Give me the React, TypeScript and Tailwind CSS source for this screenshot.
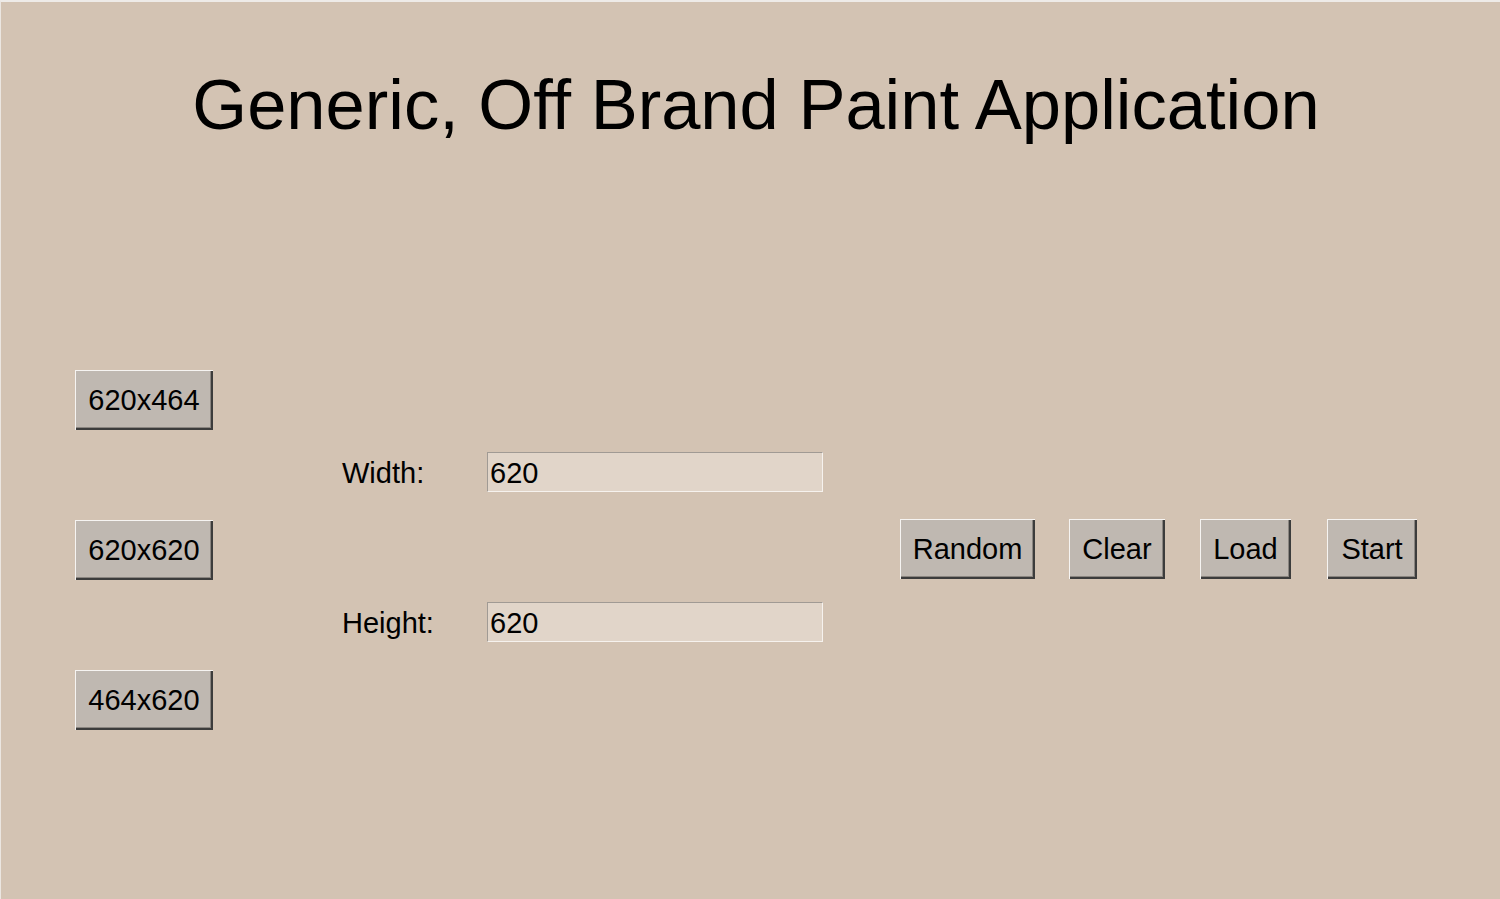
import { useState } from "react";

const btn =
  "h-[60px] bg-[#bfb8b1] text-black text-[29px] leading-none flex items-center justify-center shadow-[inset_1px_1px_#f6f4f2,inset_-2px_-2px_#3c3c3c,inset_-3px_-3px_#8a8580]";

const field =
  "w-[336px] h-[40px] bg-[#e1d5c9] text-[29px] leading-none text-black px-[2px] pt-[2px] border border-t-[#a09a94] border-l-[#a09a94] border-b-[#f6f2ee] border-r-[#f6f2ee] outline-none";

const App = () => {
  const [width, setWidth] = useState("620");
  const [height, setHeight] = useState("620");

  return (
    <div
      className="w-[1500px] h-[899px] bg-[#d3c3b3] border-t-2 border-t-[#eeebe8] border-l border-l-[#ebe6e1] overflow-hidden"
      style={{ fontFamily: '"Liberation Sans", Arial, sans-serif' }}
    >
      {/* TITLE */}
      <h1 className="text-center text-[70.5px] leading-[80px] text-black pt-[63px] pl-[11px]">
        Generic, Off Brand Paint Application
      </h1>

      {/* BODY */}
      <div className="flex items-start mt-[225px] pl-[74px]">
        {/* SIZE PRESETS */}
        <div className="flex flex-col gap-[90px]">
          <button className={`${btn} w-[138px]`}>620x464</button>
          <button className={`${btn} w-[138px]`}>620x620</button>
          <button className={`${btn} w-[138px]`}>464x620</button>
        </div>

        {/* WIDTH / HEIGHT */}
        <div className="flex flex-col gap-[110px] ml-[129px] mt-[82px]">
          <div className="flex items-center h-[40px]">
            <label className="w-[145px] text-[29px] leading-none text-black pt-[2px]">Width:</label>
            <input className={field} value={width} onChange={(e) => setWidth(e.target.value)} />
          </div>
          <div className="flex items-center h-[40px]">
            <label className="w-[145px] text-[29px] leading-none text-black pt-[2px]">Height:</label>
            <input className={field} value={height} onChange={(e) => setHeight(e.target.value)} />
          </div>
        </div>

        {/* ACTIONS */}
        <div className="flex ml-[77px] mt-[149px]">
          <button className={`${btn} w-[135px]`}>Random</button>
          <button className={`${btn} w-[96px] ml-[34px]`}>Clear</button>
          <button className={`${btn} w-[91px] ml-[35px]`}>Load</button>
          <button className={`${btn} w-[90px] ml-[36px]`}>Start</button>
        </div>
      </div>
    </div>
  );
};

export default App;
